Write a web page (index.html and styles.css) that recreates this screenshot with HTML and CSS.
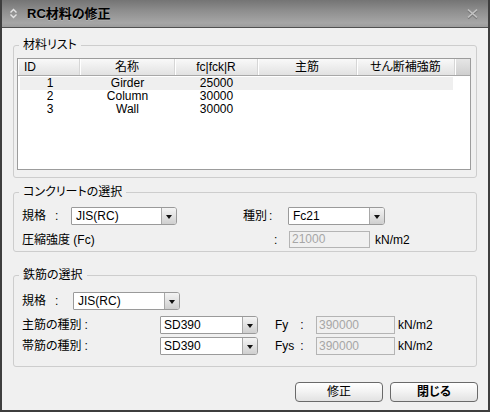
FILE: index.html
```html
<!DOCTYPE html>
<html>
<head>
<meta charset="utf-8">
<title>RC材料の修正</title>
<link rel="stylesheet" href="styles.css">
</head>
<body>
<div class="window">
  <div class="titlebar">
    <svg class="t-icon" width="9" height="11" viewBox="0 0 9 11"><path d="M1.5 4.5 L4.5 1.5 L7.5 4.5 M1.5 6.5 L4.5 9.5 L7.5 6.5" fill="none" stroke="#e4e4e4" stroke-width="1.4"/></svg>
    <span class="title">RC材料の修正</span>
    <svg class="close" width="13" height="12" viewBox="0 0 13 12"><path d="M2 2.5 L11 10.5 M11 2.5 L2 10.5" fill="none" stroke="#7a7a7a" stroke-width="2"/><path d="M2 1.5 L11 9.5 M11 1.5 L2 9.5" fill="none" stroke="#c4c4c4" stroke-width="1.5"/></svg>
  </div>
  <div class="content">
    <fieldset class="group">
      <legend>材料リスト</legend>
      <div class="gbody g1">
        <div class="list">
          <div class="lhead">
            <div class="hc c-id left">ID</div>
            <div class="hc c-name">名称</div>
            <div class="hc c-fc">fc|fck|R</div>
            <div class="hc c-main">主筋</div>
            <div class="hc c-shear">せん断補強筋</div>
            <div class="hc c-fill"></div>
          </div>
          <div class="lrows">
            <div class="lrow sel"><span class="r-id">1</span><span class="r-name">Girder</span><span class="r-fc">25000</span><span class="r-main"></span><span class="r-shear"></span></div>
            <div class="lrow"><span class="r-id">2</span><span class="r-name">Column</span><span class="r-fc">30000</span><span class="r-main"></span><span class="r-shear"></span></div>
            <div class="lrow"><span class="r-id">3</span><span class="r-name">Wall</span><span class="r-fc">30000</span><span class="r-main"></span><span class="r-shear"></span></div>
          </div>
        </div>
      </div>
    </fieldset>

    <fieldset class="group g2">
      <legend>コンクリートの選択</legend>
      <div class="gbody b2">
        <div class="row r18">
          <span class="lab w49">規格<span class="col">:</span></span>
          <div class="combo w106"><span class="ctext">JIS(RC)</span><span class="cbtn"><i class="tri"></i></span></div>
          <span class="lab w45 ml66">種別<span class="col2">:</span></span>
          <div class="combo w97"><span class="ctext">Fc21</span><span class="cbtn"><i class="tri"></i></span></div>
        </div>
        <div class="row r17 mt6">
          <span class="lab w252">圧縮強度 (Fc)</span>
          <span class="lab w15">:</span>
          <div class="field w81">21000</div>
          <span class="unit ml5">kN/m2</span>
        </div>
      </div>
    </fieldset>

    <fieldset class="group g3">
      <legend>鉄筋の選択</legend>
      <div class="gbody b3">
        <div class="row r18">
          <span class="lab w51">規格<span class="col">:</span></span>
          <div class="combo w107"><span class="ctext">JIS(RC)</span><span class="cbtn"><i class="tri"></i></span></div>
        </div>
        <div class="row r18 mt6">
          <span class="lab w138">主筋の種別<span class="col3">:</span></span>
          <div class="combo w98"><span class="ctext p3">SD390</span><span class="cbtn"><i class="tri"></i></span></div>
          <span class="lab w41 ml17">Fy<span class="col4">:</span></span>
          <div class="field w79">390000</div>
          <span class="unit ml3">kN/m2</span>
        </div>
        <div class="row r18 mt3">
          <span class="lab w138">帯筋の種別<span class="col3">:</span></span>
          <div class="combo w98"><span class="ctext p3">SD390</span><span class="cbtn"><i class="tri"></i></span></div>
          <span class="lab w41 ml17">Fys<span class="col5">:</span></span>
          <div class="field w79">390000</div>
          <span class="unit ml3">kN/m2</span>
        </div>
      </div>
    </fieldset>

    <div class="buttons">
      <button class="btn">修正</button>
      <button class="btn bold">閉じる</button>
    </div>
  </div>
</div>
</body>
</html>
```

FILE: styles.css
```css
* { box-sizing: border-box; }
html, body { margin: 0; padding: 0; }
body {
  font-family: "Liberation Sans", "Noto Sans CJK JP", sans-serif;
  font-size: 12px;
  line-height: 14px;
  color: #000;
  background: #ffffff;
  font-feature-settings: "palt";
}
.window {
  width: 490px;
  height: 412px;
  background: #f0f0f0;
  border: 2px solid #3e3e3e;
  border-top: none;
  display: flex;
  flex-direction: column;
}
.titlebar {
  height: 28px;
  flex: none;
  display: flex;
  align-items: center;
  padding-left: 7px;
  background: linear-gradient(#747474, #8e8e8e 40%, #a6a6a6 85%, #9c9c9c);
  border-bottom: 1px solid #505050;
}
.t-icon { flex: none; }
.title {
  margin-left: 9px;
  font-weight: bold;
  font-size: 13px;
  line-height: 16px;
  color: #000;
  text-shadow: 0 1px 0 rgba(255,255,255,0.25);
}
.close { margin-left: auto; margin-right: 9px; }
.content {
  padding: 10px 11px 0 11px;
  display: flex;
  flex-direction: column;
}
.group {
  margin: 0;
  padding: 0;
  border: 1px solid #cdcdcd;
  border-radius: 3px;
  min-width: 0;
}
.group legend {
  margin-left: 5px;
  padding: 0 4px;
  line-height: 14px;
  font-size: 12px;
}
.g2 { margin-top: 7px; }
.g3 { margin-top: 16px; }
.g1 { padding: 6px 5px 7px 3px; }
.b2 { padding: 8px 0 3px 8px; }
.b3 { padding: 10px 0 11px 8px; }

/* list */
.list {
  height: 112px;
  background: #fff;
  border: 1px solid #9c9c9c;
  display: flex;
  flex-direction: column;
}
.lhead {
  display: flex;
  height: 17px;
  border-bottom: 1px solid #a8a8a8;
}
.hc {
  height: 16px;
  line-height: 16px;
  text-align: center;
  background: linear-gradient(#f9f9f9, #ebebeb 60%, #e2e2e2);
  border-right: 1px solid #d6d6d6;
  box-shadow: inset 1px 0 0 #ffffff;
  white-space: nowrap;
}
.hc.left { text-align: left; padding-left: 6px; }
.c-id { width: 62px; }
.c-name { width: 95px; }
.c-fc { width: 83px; }
.c-main { width: 99px; }
.c-shear { width: 98px; }
.c-fill { flex: 1; border-right: none; background: linear-gradient(#e6e6e6, #cfcfcf); }
.lrows { padding-top: 1px; }
.lrow {
  display: flex;
  height: 13px;
  line-height: 13px;
  margin-left: 2px;
  width: 433px;
}
.lrow.sel { background: #efefef; }
.lrow span { text-align: center; white-space: nowrap; }
.r-id { width: 60px; }
.r-name { width: 95px; }
.r-fc { width: 83px; }
.r-main { width: 99px; }
.r-shear { width: 96px; }

/* form rows */
.row { display: flex; align-items: center; }
.r18 { height: 18px; }
.r17 { height: 17px; }
.mt6 { margin-top: 6px; }
.mt3 { margin-top: 3px; }
.lab { flex: none; white-space: nowrap; }
.col { margin-left: 9px; }
.col2 { margin-left: 2px; }
.col3 { margin-left: 3px; }
.col4 { margin-left: 12px; }
.col5 { margin-left: 6px; }
.w15 { width: 15px; }
.w41 { width: 41px; }
.w45 { width: 45px; }
.w49 { width: 49px; }
.w51 { width: 51px; }
.w138 { width: 138px; }
.w252 { width: 252px; }
.w79 { width: 79px; }
.w81 { width: 81px; }
.w97 { width: 97px; }
.w98 { width: 98px; }
.w106 { width: 106px; }
.w107 { width: 107px; }
.ml3 { margin-left: 3px; }
.ml5 { margin-left: 5px; }
.ml17 { margin-left: 17px; }
.ml66 { margin-left: 66px; }

.combo {
  flex: none;
  height: 18px;
  display: flex;
  background: #fff;
  border: 1px solid #9a9a9a;
  border-radius: 1px 3px 3px 1px;
}
.ctext {
  flex: 1;
  padding-left: 4px;
  line-height: 16px;
  white-space: nowrap;
}
.ctext.p3 { padding-left: 3px; }
.cbtn {
  width: 15px;
  flex: none;
  border-left: 1px solid #a8a8a8;
  border-radius: 0 2px 2px 0;
  background: linear-gradient(#f4f4f4, #e0e0e0 55%, #cfcfcf);
  display: flex;
  align-items: center;
  justify-content: center;
}
.tri {
  width: 0;
  height: 0;
  border-left: 3.5px solid transparent;
  border-right: 3.5px solid transparent;
  border-top: 4px solid #111;
  margin-top: 1px;
}
.field {
  flex: none;
  height: 17px;
  line-height: 15px;
  padding-left: 2px;
  border: 1px solid #b4b4b4;
  background: #f0f0f0;
  color: #a6a6a6;
}
.r18 .field { height: 18px; line-height: 16px; }
.unit { flex: none; }

/* buttons */
.buttons {
  margin-top: 15px;
  margin-right: -1px;
  display: flex;
  justify-content: flex-end;
  gap: 7px;
}
.btn {
  width: 88px;
  height: 20px;
  padding: 0;
  font-family: inherit;
  font-size: 12px;
  line-height: 16px;
  color: #000;
  border: 1px solid #6a6a6a;
  border-radius: 4px;
  background: linear-gradient(#ffffff, #f2f2f2 50%, #e2e2e2);
  font-feature-settings: "palt";
}
.btn.bold { font-weight: bold; }
```
